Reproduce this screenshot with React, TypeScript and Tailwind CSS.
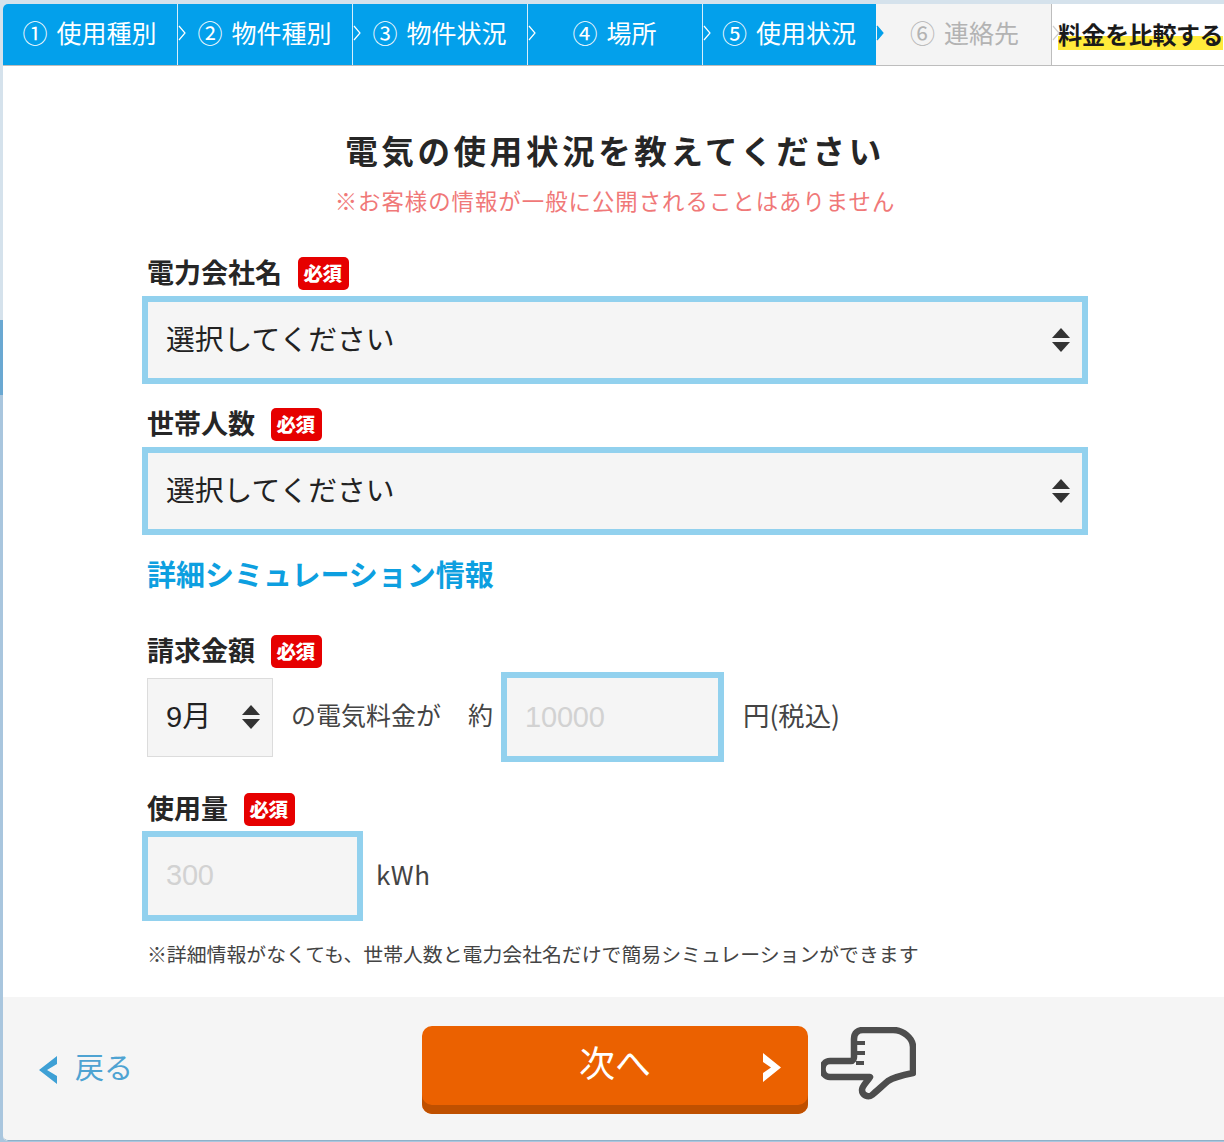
const JP = "font-['Noto_Sans_CJK_JP','Noto_Sans',sans-serif]";

function Chevron({ className, fill = "none", stroke = "#fff" }: { className: string; fill?: string; stroke?: string }) {
  return (
    <svg viewBox="0 0 8 16" className={`absolute top-[21px] h-4 w-2 ${className}`}>
      <path d="M1 1 L7 8 L1 15" fill={fill} stroke={stroke} strokeWidth="1.2" />
    </svg>
  );
}

function Step({ n, label, active, width, pad }: { n: string; label: string; active: boolean; width: string; pad: string }) {
  return (
    <div
      className={`flex h-full items-center justify-center gap-[9px] pb-[4px] pr-[1px] text-[25px] ${width} ${pad} ${
        active ? "bg-[#03a0eb] text-white" : "bg-[#f4f4f4] text-[#b3b3b3]"
      }`}
    >
      <span>{n}</span>
      <span>{label}</span>
    </div>
  );
}

function Badge() {
  return (
    <span className="ml-[16px] flex h-[33px] w-[51px] items-center justify-center rounded-[5px] bg-[#e60000] pb-[2px] pr-[2px] text-[19.5px] font-black tracking-[-0.5px] text-white">
      必須
    </span>
  );
}

function Label({ text }: { text: string }) {
  return (
    <div className="flex h-[33px] items-center pl-[5px]">
      <span className="pb-[4px] text-[27px] font-bold leading-none text-[#262626]">{text}</span>
      <Badge />
    </div>
  );
}

function UpDown() {
  return (
    <svg viewBox="0 0 18 24" className="h-6 w-[18px]" fill="#333">
      <path d="M9 0 L18 10 H0 Z" />
      <path d="M0 14 H18 L9 24 Z" />
    </svg>
  );
}

function BigSelect() {
  return (
    <div className="flex h-[88px] w-[946px] items-center justify-between border-[6px] border-[#92d1ee] bg-[#f5f5f5] pl-[18px] pr-[12px] text-[28.8px] text-[#222]">
      <span className="pb-[4px]">選択してください</span>
      <UpDown />
    </div>
  );
}

function NumberInput({ placeholder, width, className }: { placeholder: string; width: string; className?: string }) {
  return (
    <input
      readOnly
      placeholder={placeholder}
      className={`h-[90px] ${width} border-[6px] border-[#92d1ee] bg-[#f5f5f5] pl-[18px] font-['Liberation_Sans',sans-serif] text-[29px] tracking-[-0.2px] outline-none placeholder:text-[#d2d2d2] ${className ?? ""}`}
    />
  );
}

export default function App() {
  return (
    <div className="h-[1142px] w-[1224px] overflow-hidden bg-[linear-gradient(to_bottom,#d5e2ec_0,#d5e2ec_320px,#6aa8d2_320px,#6aa8d2_395px,#a9c6de_395px,#a9c6de_100%)] pl-[3px] pt-[4px]">
      <div className={`flex h-[1137px] w-[1221px] flex-col overflow-hidden rounded-tl-[5px] rounded-bl-[5px] bg-white ${JP}`}>
        <header className="relative flex h-[62px] shrink-0 border-b border-[#bdbdbd]">
          <div className="flex h-[61px]">
            <Step n="①" label="使用種別" active width="w-[175px]" pad="border-r border-[#d6eefb]" />
            <Step n="②" label="物件種別" active width="w-[175px]" pad="border-r border-[#d6eefb]" />
            <Step n="③" label="物件状況" active width="w-[175px]" pad="border-r border-[#d6eefb]" />
            <Step n="④" label="場所" active width="w-[175px]" pad="border-r border-[#d6eefb]" />
            <Step n="⑤" label="使用状況" active width="w-[173px]" pad="" />
            <Step n="⑥" label="連絡先" active={false} width="w-[176px]" pad="border-r border-[#bdbdbd] pl-[3px]" />
          </div>
          <div className="flex h-[61px] flex-1 items-center pl-[6px]">
            <span className="mb-[2px] bg-[linear-gradient(to_bottom,transparent_0,transparent_55%,#ffeb3b_55%,#ffeb3b_100%)] text-[24px] font-bold leading-[32px] tracking-[-0.4px] whitespace-nowrap text-[#1a1a1a]">
              料金を比較する
            </span>
          </div>
          <Chevron className="left-[175px]" />
          <Chevron className="left-[350px]" />
          <Chevron className="left-[525px]" />
          <Chevron className="left-[700px]" />
          <Chevron className="left-[873px]" fill="#03a0eb" stroke="#03a0eb" />
          <Chevron className="left-[1049px]" stroke="#d0d0d0" />
        </header>

        <main className="h-[931px] shrink-0 pl-[139px] pt-[65px]">
          <h1 className="h-10 w-[946px] text-center text-[32.5px] font-bold leading-[38px] tracking-[3.65px] text-[#262626]">
            電気の使用状況を教えてください
          </h1>
          <p className="mt-[15px] h-[30px] w-[946px] text-center text-[22.4px] leading-[28px] tracking-[1px] text-[#f07878]">
            ※お客様の情報が一般に公開されることはありません
          </p>

          <div className="mt-[41px]">
            <Label text="電力会社名" />
          </div>
          <div className="mt-[6px]">
            <BigSelect />
          </div>

          <div className="mt-[24px]">
            <Label text="世帯人数" />
          </div>
          <div className="mt-[6px]">
            <BigSelect />
          </div>

          <h2 className="mt-[20px] h-10 pl-[5px] text-[29px] font-bold leading-[36px] text-[#0d9fe0]">
            詳細シミュレーション情報
          </h2>

          <div className="mt-[40px]">
            <Label text="請求金額" />
          </div>
          <div className="mt-[4px] flex h-[90px] items-center pl-[5px] text-[25px] text-[#444]">
            <div className="flex h-[79px] w-[126px] items-center justify-between border border-[#dcdcdc] bg-[#f5f5f5] pl-[18px] pr-[12px] text-[29px] text-[#222]">
              <span className="pt-[2px] font-['Liberation_Sans','Noto_Sans_CJK_JP',sans-serif]">9月</span>
              <UpDown />
            </div>
            <span className="mb-[4px] ml-[18px]">の電気料金が</span>
            <span className="mb-[4px] ml-[27px]">約</span>
            <NumberInput placeholder="10000" width="w-[223px]" className="ml-[8px]" />
            <span className="mb-[4px] ml-[19px] text-[26.4px]">円(税込)</span>
          </div>

          <div className="mt-[31px]">
            <Label text="使用量" />
          </div>
          <div className="mt-[5px] flex h-[89px] items-center">
            <NumberInput placeholder="300" width="w-[221px]" />
            <span className="mb-[5px] ml-[13px] text-[26px] tracking-[0.5px] text-[#444]">kWh</span>
          </div>

          <p className="mt-[20px] h-[30px] pl-[5px] text-[19.88px] leading-[27px] text-[#444]">
            ※詳細情報がなくても、世帯人数と電力会社名だけで簡易シミュレーションができます
          </p>
        </main>

        <footer className="flex h-[144px] shrink-0 items-start rounded-bl-[5px] border-b border-[#8fb0c8] bg-[#f5f5f5]">
          <div className="mt-[50px] flex items-center pl-[36px] text-[29px] leading-[32px] text-[#4ea3d2]">
            <svg viewBox="0 0 18 28" className="mt-[9px] h-7 w-[18px]">
              <path d="M18 0 V8 L8 14 L18 20 V28 L0 14 Z" fill="#3ea0d5" />
            </svg>
            <span className="ml-[18px]">戻る</span>
          </div>
          <button className="relative ml-[289px] mt-[29px] h-[88px] w-[386px] rounded-[10px] bg-[#eb6100] text-[36px] text-white shadow-[inset_0_-9px_0_0_#bf5000]">
            <span className="absolute inset-x-0 top-[9px] leading-[52px]">次へ</span>
            <svg viewBox="0 0 18 29" className="absolute left-[341px] top-[27px] h-[29px] w-[18px]">
              <path d="M0 0 L18 14.5 L0 29 V20 L8 14.5 L0 9 Z" fill="#fff" />
            </svg>
          </button>
          <svg viewBox="0 0 95 74" className="ml-[13px] mt-[30px] h-[74px] w-[95px]" fill="none" stroke="#4d4d4d" strokeWidth="6.5" strokeLinejoin="round" strokeLinecap="round">
            <path d="M9 34 H30 C32 34 33 32 33 30 V12 C33 6 37 3 42 3 H72 C82 3 92 11 92 20 V46 C82 48 73 50 67 54 C61 59 56 64 51 68 C47 71 41 68 41 63 C41 59 46 55 49 50 H9 C-1 50 -1 34 9 34 Z" />
            <path d="M35 16 H44 M35 26 H44 M35 36 H43" strokeWidth="4" strokeLinecap="butt" />
          </svg>
        </footer>
      </div>
    </div>
  );
}
